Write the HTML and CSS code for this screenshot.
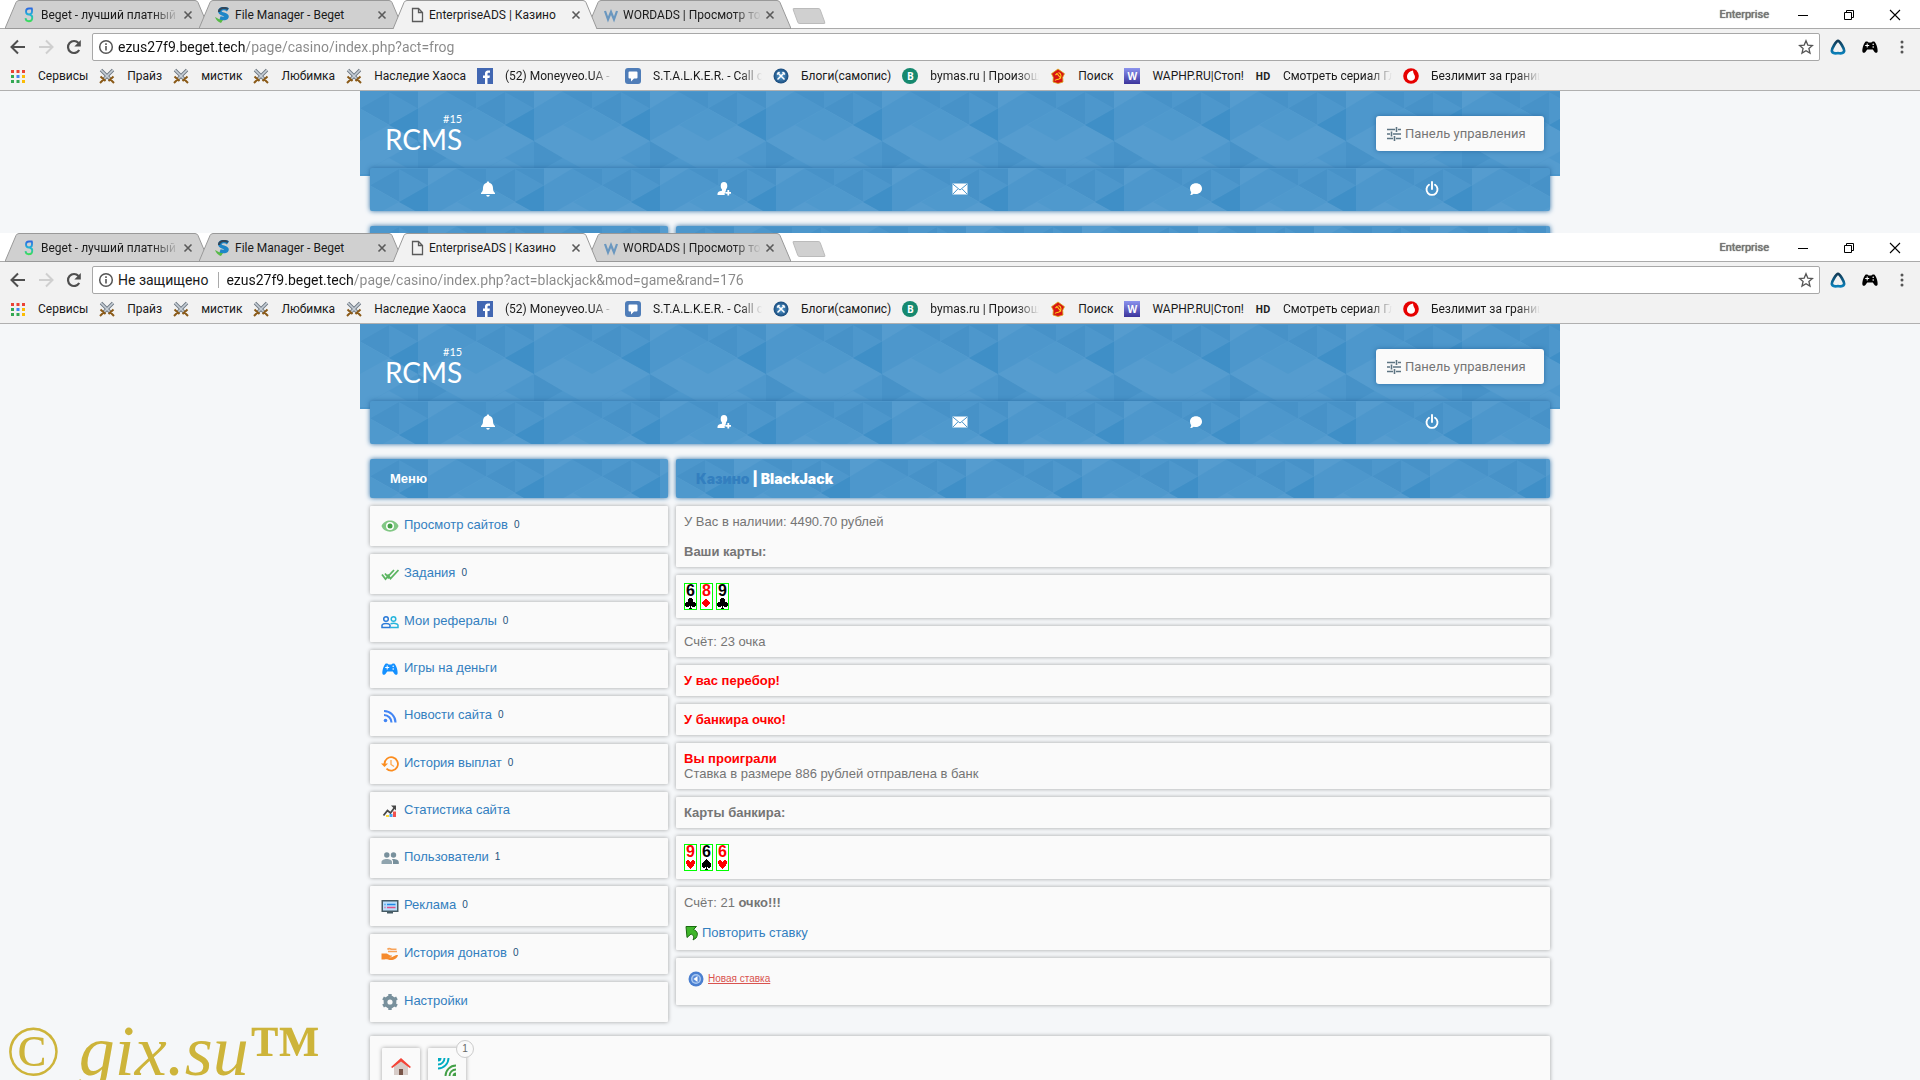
FILE: index.html
```html
<!DOCTYPE html>
<html lang="ru">
<head>
<meta charset="utf-8">
<title>EnterpriseADS | Казино</title>
<link rel="stylesheet" href="styles.css">
</head>
<body>
<svg class="sprite" aria-hidden="true">
  <defs>
    <linearGradient id="g-beget" x1="0" y1="0" x2="0" y2="1"><stop offset="0" stop-color="#2b6be0"/><stop offset=".5" stop-color="#20b5d8"/><stop offset="1" stop-color="#3ddc5a"/></linearGradient>
    <linearGradient id="g-drop" x1="0" y1="0" x2="0" y2="1"><stop offset="0" stop-color="#123a55"/><stop offset="1" stop-color="#0b7fb8"/></linearGradient>
    <radialGradient id="g-ball"><stop offset="0" stop-color="#5fa8dc"/><stop offset="1" stop-color="#184a7c"/></radialGradient>
  </defs>
  <symbol id="i-beget" viewBox="0 0 16 16"><path d="M11.500 1.500H8a3 3 0 1 0 0 6 3 3 0 0 0 3-3V1.500M8 7.500h.5a3.400 3.400 0 1 1-4 3.700" fill="none" stroke="url(#g-beget)" stroke-width="1.800"/></symbol>
  <symbol id="i-sprut" viewBox="0 0 16 16"><path d="M13 3C9 0 4 2 5 5c.8 2.500 7 2 7 4.500 0 2-4 2.500-7 1.500" fill="none" stroke="#1d86c8" stroke-width="3.600"/><path d="M4 5C4 1 9 0 13 2" fill="none" stroke="#33475a" stroke-width="2.200"/><path d="M0 10c3 1 4 3 8 3l-2 3c-3-1-5-3-6-6z" fill="#58b947"/></symbol>
  <symbol id="i-page" viewBox="0 0 16 16"><path d="M3.500 1.500h6l4 4v9h-10zM9.500 1.500v4h4" fill="none" stroke="#5a5a5a" stroke-width="1.300"/></symbol>
  <symbol id="i-wordads" viewBox="0 0 16 16"><path d="M2 4l3 8.500L8 5l3 7.500L14 4" fill="none" stroke="#6a97bf" stroke-width="2.200"/></symbol>
  <symbol id="i-x" viewBox="0 0 10 10"><path d="M1.500 1.500l7 7M8.500 1.500l-7 7" fill="none" stroke="currentColor" stroke-width="1.600"/></symbol>
  <symbol id="i-back" viewBox="0 0 16 16"><path d="M15 8H2M8 1.500L1.500 8 8 14.500" fill="none" stroke="currentColor" stroke-width="2"/></symbol>
  <symbol id="i-reload" viewBox="0 0 16 16"><path d="M13.200 11A6 6 0 1 1 12.500 4" fill="none" stroke="currentColor" stroke-width="2.200"/><path d="M14.800 1v6.500H8.300z" fill="currentColor"/></symbol>
  <symbol id="i-info" viewBox="0 0 16 16"><circle cx="8" cy="8" r="6.300" fill="none" stroke="#555" stroke-width="1.500"/><path d="M7.200 7h1.600v4.500H7.200zM7.200 4.300h1.600v1.600H7.200z" fill="#555"/></symbol>
  <symbol id="i-star" viewBox="0 0 16 16"><path d="M8 1.800l1.800 4.300 4.600.4-3.500 3 1.100 4.600L8 11.700l-4 2.400 1.100-4.600-3.500-3 4.600-.4z" fill="none" stroke="#555" stroke-width="1.300"/></symbol>
  <symbol id="i-drop" viewBox="0 0 16 16"><path d="M8 1.800C9.500 1.800 15 10 14 12.500S10 14.200 8 14.200 3 15 2 12.500 6.500 1.800 8 1.800z" fill="none" stroke="url(#g-drop)" stroke-width="2.700"/></symbol>
  <symbol id="i-pad" viewBox="0 0 16 16"><path d="M3.200 3C4 2.300 6 2.500 6.500 3.500h3C10 2.500 12 2.300 12.800 3 14.500 5 16 10 15.600 12.500c-.4 2-2.400 1.600-3.600-.2L10.800 10.500H5.200L4 12.300C2.800 14.100.8 14.500.4 12.500 0 10 1.500 5 3.200 3z" fill="currentColor"/><path d="M5.200 4.500v4M3.200 6.500h4" stroke="#fff" stroke-width="1"/><circle cx="11.200" cy="5.200" r=".8" fill="#fff"/><circle cx="11.200" cy="8" r=".8" fill="#fff"/></symbol>
  <symbol id="i-dots" viewBox="0 0 16 16"><g fill="#555"><circle cx="8" cy="3" r="1.500"/><circle cx="8" cy="8" r="1.500"/><circle cx="8" cy="13" r="1.500"/></g></symbol>
  <symbol id="i-apps" viewBox="0 0 16 16"><path d="M1 2h3v3H1zM6.500 2h3v3h-3zM12 2h3v3h-3z" fill="#ea4335"/><path d="M1 7h3v3H1z" fill="#34a853"/><path d="M6.500 7h3v3h-3z" fill="#4285f4"/><path d="M12 7h3v3h-3z" fill="#fbbc05"/><path d="M1 12h3v3H1zM6.500 12h3v3h-3z" fill="#34a853"/><path d="M12 12h3v3h-3z" fill="#fbbc05"/></symbol>
  <symbol id="i-swords" viewBox="0 0 16 16"><path d="M2 2l9 9M14 2l-9 9" stroke="#6e7883" stroke-width="3.400"/><path d="M2 2l9 9M14 2l-9 9" stroke="#c6ced6" stroke-width="1.700"/><path d="M1.500 8.500l5 4.500M14.500 8.500l-5 4.500M4.500 11.500L1 15M11.500 11.500L15 15" stroke="#8a5a18" stroke-width="2"/></symbol>
  <symbol id="i-fb" viewBox="0 0 16 16"><path d="M0 0h16v16H0z" fill="#4267b2"/><path d="M10.500 16V10h2l.4-2.500h-2.400V6c0-.8.3-1.200 1.300-1.200H13V2.600C12 2.400 8 2 8 5.600v1.900H6V10h2v6z" fill="#fff"/></symbol>
  <symbol id="i-chat" viewBox="0 0 16 16"><rect width="16" height="16" rx="3" fill="#4f7db8"/><path d="M3.500 4.500q0-1 1-1h7q1 0 1 1v5q0 1-1 1H9L6 13.500v-3H4.500q-1 0-1-1z" fill="#fff"/></symbol>
  <symbol id="i-tools" viewBox="0 0 16 16"><circle cx="8" cy="8" r="7.500" fill="url(#g-ball)"/><path d="M4.500 4.500l7 7M11.500 4.500l-7 7M4 6.500L6.500 4M12 6.500L9.500 4" stroke="#fff" stroke-width="1.500"/></symbol>
  <symbol id="i-ussr" viewBox="0 0 16 16"><path d="M8 1l6.500 4.700-1.800 3.600.3 4.700-5 1.500L3 14l.3-4.700L1.500 5.700z" fill="#d81414" stroke="#d9a514" stroke-width=".8"/><path d="M8.500 4.500c3 1 3.500 5 .5 6.500-1.500.7-3 .2-4 1.500M5.500 7L7 5.500l4 5" fill="none" stroke="#ffd21c" stroke-width="1.100"/></symbol>
  <symbol id="i-voda" viewBox="0 0 16 16"><circle cx="8" cy="8" r="7.800" fill="#e60000"/><path d="M10 2.500C5.500 3.500 4 6.500 4 9c0 5 8 5 8 0C12 7 10 5.500 10 2.500z" fill="#fff"/></symbol>
  <symbol id="i-min" viewBox="0 0 12 12"><path d="M1 6.500h10" stroke="#000"/></symbol>
  <symbol id="i-restore" viewBox="0 0 12 12"><path d="M1.500 3.500h7v7h-7zM3.500 3.500v-2h7v7h-2" fill="none" stroke="#000"/></symbol>
  <symbol id="i-close" viewBox="0 0 12 12"><path d="M1 1l10 10M11 1L1 11" fill="none" stroke="#000" stroke-width="1.100"/></symbol>

  <symbol id="i-tune" viewBox="0 0 16 16"><path d="M1 3.500h8M12 3.500h3M10.500 1v5M1 8h3M7 8h8M5.500 5.500v5M1 12.500h6M10 12.500h5M8.500 10v5" stroke="#5d7482" stroke-width="1.600"/></symbol>
  <symbol id="i-bell" viewBox="0 0 16 16"><path d="M8 .5c.8 0 1.200.5 1.200 1.200C12 2.400 13 4.800 13 7c0 2.800.6 3.800 2 5v1H1v-1c1.400-1.200 2-2.200 2-5 0-2.200 1-4.600 3.800-5.300C6.800 1 7.200.5 8 .5zM6.300 14h3.400c0 1-.7 1.700-1.700 1.700S6.300 15 6.300 14z" fill="#fff"/></symbol>
  <symbol id="i-adduser" viewBox="0 0 16 16"><path d="M8 1c2.200 0 3.300 1.500 3.300 3.700 0 1.700-.6 3-1.300 3.800v1.300h-.5V12H8.700v2H1.500c0-3 1-3.600 4.500-4.200V8.500C5.200 7.700 4.700 6.400 4.700 4.700 4.700 2.500 5.800 1 8 1z" fill="#fff"/><path d="M12.300 9v5.500M9.500 11.800H15" stroke="#fff" stroke-width="1.800"/></symbol>
  <symbol id="i-mail" viewBox="0 0 16 16"><path d="M.5 2.500h15v11H.5z" fill="#fff"/><path d="M.8 3L8 9l7.200-6M.8 13.200l5-5.200M15.200 13.200l-5-5.200" fill="none" stroke="#4b96cb" stroke-width="1"/></symbol>
  <symbol id="i-bubble" viewBox="0 0 16 16"><path d="M8 2.200c3.500 0 6 2.200 6 5.300S11.500 13 8 13c-.8 0-1.500-.1-2.200-.3-1 .9-2.300 1.200-3.600 1.200.6-.7.900-1.600 1-2.600C2.400 10.300 2 9 2 7.500c0-3.100 2.500-5.300 6-5.300z" fill="#fff"/></symbol>
  <symbol id="i-power" viewBox="0 0 16 16"><path d="M5 3.800a5.500 5.500 0 1 0 6 0M8 1v7" fill="none" stroke="#fff" stroke-width="1.900" stroke-linecap="round"/></symbol>

  <symbol id="i-eye" viewBox="0 0 18 18"><path d="M.5 9C3 1.500 15 1.500 17.500 9 15 16.500 3 16.500.5 9z" fill="#81c784"/><circle cx="9" cy="9" r="4" fill="#fff"/><circle cx="9" cy="9" r="2.500" fill="#43a047"/></symbol>
  <symbol id="i-checks" viewBox="0 0 18 18"><path d="M1 9.500l3.500 4.500L13 5M6.500 9.500L9.500 13.500 17.500 5M4 8.500L8 13.500" fill="none" stroke="#5cb562" stroke-width="1.800"/></symbol>
  <symbol id="i-refs" viewBox="0 0 18 18"><g fill="none" stroke-width="1.500"><circle cx="5" cy="6" r="2.300" stroke="#2979d8"/><path d="M1 14.500V12c1-2 7-2 8 0v2.500z" stroke="#2979d8"/><circle cx="12.500" cy="6" r="2.300" stroke="#26b5dc"/><path d="M9.500 10.800c3-1 7-.5 7.500 1.200v2.500H9.500" stroke="#26b5dc"/></g></symbol>
  <symbol id="i-rss" viewBox="0 0 18 18"><circle cx="4.500" cy="13.500" r="1.800" fill="#4285f4"/><path d="M3 8a7.500 7.500 0 0 1 7.500 7.500M3 4a11.500 11.500 0 0 1 11.500 11.500" fill="none" stroke="#4285f4" stroke-width="2.100"/></symbol>
  <symbol id="i-history" viewBox="0 0 18 18"><path d="M3.500 9a6.700 6.700 0 1 1 2 4.700" fill="none" stroke="#fb8c1e" stroke-width="1.800"/><path d="M0 8.500h7L3.500 12z" fill="#fb8c1e"/><path d="M10 5v4.500l3 2" fill="none" stroke="#ffa94d" stroke-width="1.300"/></symbol>
  <symbol id="i-stats" viewBox="0 0 18 18"><path d="M2.500 13.500l4-5 3 2.500L14 5" fill="none" stroke="#484848" stroke-width="1.800"/><path d="M10 3.500h5v5z" fill="#484848"/><path d="M5 13h3v2H5z" fill="#fdd835"/><path d="M8.500 12h3v3h-3z" fill="#42a5f5"/><path d="M12 9.500h3V15h-3z" fill="#ef5350"/></symbol>
  <symbol id="i-users" viewBox="0 0 18 18"><circle cx="5.800" cy="6" r="2.700" fill="#78909c"/><path d="M.5 15v-2c0-4 10.500-4 10.500 0v2z" fill="#90a4ae"/><circle cx="12.500" cy="6" r="2.700" fill="#78909c"/><path d="M12 15v-2.500c0-1-.5-1.800-1.300-2.500C14 9.500 17.800 10.800 17.800 13v2z" fill="#78909c"/></symbol>
  <symbol id="i-screen" viewBox="0 0 18 18"><path d="M.5 3h17v12H12v1.500H6V15H.5z" fill="#455a64"/><path d="M2 4.500h14v9H2z" fill="#bbdefb"/><path d="M3.500 7.500h1M6 7.500h8.500" stroke="#1e88e5" stroke-width="1.300"/><path d="M3.500 10.500h1M6 10.500h8.500" stroke="#e0508a" stroke-width="1.300"/></symbol>
  <symbol id="i-donate" viewBox="0 0 18 18"><path d="M.5 8.500h4c3 0 3 2 6 2 1 0 1 1.500-2.500 1.700 5 .3 5-2.200 9-2.200-1 4.500-6 6-10 4.500-2-.8-3 0-6.500 0z" fill="#f58a2c"/><path d="M6.500 4.500c1-1.500 2.500-1 4-.3h5M7 6.500h9" fill="none" stroke="#f7a35a" stroke-width="1.600"/></symbol>
  <symbol id="i-gear" viewBox="0 0 18 18"><circle cx="9" cy="9" r="4.500" fill="none" stroke="#78909c" stroke-width="3.800"/><path d="M7.300 1h3.400v3H7.300zM7.300 14h3.400v3H7.300z" fill="#78909c"/><path id="gt" d="M7.300 1h3.400v3H7.300zM7.300 14h3.400v3H7.300z" fill="#78909c" transform="rotate(60 9 9)"/><path d="M7.300 1h3.400v3H7.300zM7.300 14h3.400v3H7.300z" fill="#78909c" transform="rotate(120 9 9)"/></symbol>
  <symbol id="i-repeat" viewBox="0 0 16 16"><path d="M2 1.500h10.500l-3 3c4 1.500 5 5 2.500 8.500l-3 2c1.500-3 .5-5-2-6L3 12.500z" fill="#3fb62a" stroke="#1a6a10" stroke-width="1"/></symbol>
  <symbol id="i-prev" viewBox="0 0 16 16"><circle cx="8" cy="8" r="7.500" fill="#4a7fd0"/><circle cx="8" cy="8" r="5" fill="#a9c8f0"/><circle cx="8" cy="8" r="3.500" fill="#5b8cd8"/><path d="M9.500 5v6L5.500 8z" fill="#fff"/></symbol>
  <symbol id="i-home" viewBox="0 0 20 20"><path d="M3 9l7-6 7 6v9H3z" fill="#d7ccc8"/><path d="M8 12h4v6H8z" fill="#795548"/><path d="M0 10L10 1l10 9-1.300 1L10 4.500 1.300 11z" fill="#f44336"/></symbol>
  <symbol id="i-waves" viewBox="0 0 20 20"><g fill="none" stroke-width="1.900"><path d="M1 11.500A10.500 10.500 0 0 0 11.500 1M1 7.500A6.500 6.500 0 0 0 7.500 1" stroke="#00acc1"/><path d="M8.500 19A10.500 10.500 0 0 1 19 8.500M12.500 19a6.500 6.500 0 0 1 6.500-6.500" stroke="#43a047"/></g><path d="M1 1h3.500A3.500 3.500 0 0 1 1 4.500z" fill="#00acc1"/><path d="M19 19h-3.500a3.500 3.500 0 0 1 3.500-3.500z" fill="#43a047"/></symbol>

  <symbol id="s-club" viewBox="0 0 11 11" shape-rendering="crispEdges"><path d="M4 0h3v1h1v3h2v1h1v3h-1v1H7V8H6v2h1v1H4v-1h1V8H4v1H1V8H0V5h1V4h2V1h1z" fill="#000"/></symbol>
  <symbol id="s-diamond" viewBox="0 0 11 11" shape-rendering="crispEdges"><path d="M4 1h2v1h1v1h1v1h1v2H8v1H7v1H6v1H4V8H3V7H2V6H1V4h1V3h1V2h1z" fill="#f00"/></symbol>
  <symbol id="s-heart" viewBox="0 0 11 11" shape-rendering="crispEdges"><path d="M2 1h2v1h1v1h1V2h1V1h2v1h1v3H9v2H8v1H7v1H6v1H5V9H4V8H3V7H2V5H1V2h1z" fill="#f00"/></symbol>
  <symbol id="s-spade" viewBox="0 0 11 11" shape-rendering="crispEdges"><path d="M5 0h1v1h1v1h1v1h1v1h1v4H9v1H7V8H6v2h1v1H4v-1h1V8H4v1H2V8H1V4h1V3h1V2h1V1h1z" fill="#000"/></symbol>
</svg>

<section class="window window-top">
  <header class="chrome">
    <div class="tabstrip">
      <div class="tab"><svg class="ico"><use href="#i-beget"/></svg><span class="tab-title fade">Beget - лучший платный</span><button class="tab-x" aria-label="Закрыть"><svg><use href="#i-x"/></svg></button></div>
      <div class="tab"><svg class="ico"><use href="#i-sprut"/></svg><span class="tab-title">File Manager - Beget</span><button class="tab-x" aria-label="Закрыть"><svg><use href="#i-x"/></svg></button></div>
      <div class="tab active"><svg class="ico"><use href="#i-page"/></svg><span class="tab-title">EnterpriseADS | Казино</span><button class="tab-x" aria-label="Закрыть"><svg><use href="#i-x"/></svg></button></div>
      <div class="tab"><svg class="ico"><use href="#i-wordads"/></svg><span class="tab-title fade">WORDADS | Просмотр то</span><button class="tab-x" aria-label="Закрыть"><svg><use href="#i-x"/></svg></button></div>
      <button class="tab-new" aria-label="Новая вкладка"></button>
      <div class="winctl"><span class="profile">Enterprise</span><button aria-label="Свернуть"><svg><use href="#i-min"/></svg></button><button aria-label="Окно"><svg><use href="#i-restore"/></svg></button><button aria-label="Закрыть"><svg><use href="#i-close"/></svg></button></div>
    </div>
    <div class="toolbar">
      <button aria-label="Назад"><svg class="ico"><use href="#i-back"/></svg></button>
      <button class="off" aria-label="Вперёд"><svg class="ico flip"><use href="#i-back"/></svg></button>
      <button aria-label="Обновить"><svg class="ico"><use href="#i-reload"/></svg></button>
      <div class="omnibox">
        <svg class="ico"><use href="#i-info"/></svg>
        <input class="url" type="text" aria-label="Адрес" value="ezus27f9.beget.tech/page/casino/index.php?act=frog">
        <button aria-label="В закладки"><svg class="ico"><use href="#i-star"/></svg></button>
      </div>
      <button aria-label="Расширение"><svg class="ico"><use href="#i-drop"/></svg></button>
      <button class="black" aria-label="Игры"><svg class="ico"><use href="#i-pad"/></svg></button>
      <button aria-label="Меню"><svg class="ico"><use href="#i-dots"/></svg></button>
    </div>
    <nav class="bookmarks">
      <a href="#"><svg class="ico"><use href="#i-apps"/></svg><span>Сервисы</span></a>
      <a href="#"><svg class="ico"><use href="#i-swords"/></svg><span>Прайз</span></a>
      <a href="#"><svg class="ico"><use href="#i-swords"/></svg><span>мистик</span></a>
      <a href="#"><svg class="ico"><use href="#i-swords"/></svg><span>Любимка</span></a>
      <a href="#"><svg class="ico"><use href="#i-swords"/></svg><span>Наследие Хаоса</span></a>
      <a href="#"><svg class="ico"><use href="#i-fb"/></svg><span class="long fade">(52) Moneyveo.UA -</span></a>
      <a href="#"><svg class="ico"><use href="#i-chat"/></svg><span class="long fade">S.T.A.L.K.E.R. - Call of</span></a>
      <a href="#"><svg class="ico"><use href="#i-tools"/></svg><span>Блоги(самопис)</span></a>
      <a href="#"><b class="ico badge-b">B</b><span class="long fade">bymas.ru | Произош</span></a>
      <a href="#"><svg class="ico"><use href="#i-ussr"/></svg><span>Поиск</span></a>
      <a href="#"><b class="ico badge-w">W</b><span>WAPHP.RU|Стоп!</span></a>
      <a href="#"><b class="ico badge-hd">HD</b><span class="long fade">Смотреть сериал Гл</span></a>
      <a href="#"><svg class="ico"><use href="#i-voda"/></svg><span class="long fade">Безлимит за границ</span></a>
    </nav>
  </header>
  <div class="page">
    <div class="banner">
      <a class="logo" href="#"><small>#15</small>RCMS</a>
      <button class="panel-btn"><svg class="ico"><use href="#i-tune"/></svg>Панель управления</button>
    </div>
    <div class="content">
      <nav class="mainnav tri">
        <a href="#" aria-label="Уведомления"><svg class="ico"><use href="#i-bell"/></svg></a>
        <a href="#" aria-label="Друзья"><svg class="ico"><use href="#i-adduser"/></svg></a>
        <a href="#" aria-label="Почта"><svg class="ico"><use href="#i-mail"/></svg></a>
        <a href="#" aria-label="Чат"><svg class="ico"><use href="#i-bubble"/></svg></a>
        <a href="#" aria-label="Выход"><svg class="ico"><use href="#i-power"/></svg></a>
      </nav>
      <div class="cols">
        <aside class="side"><div class="head tri"></div></aside>
        <main class="main"><div class="head tri"></div></main>
      </div>
    </div>
  </div>
</section>

<section class="window window-main">
  <header class="chrome">
    <div class="tabstrip">
      <div class="tab"><svg class="ico"><use href="#i-beget"/></svg><span class="tab-title fade">Beget - лучший платный</span><button class="tab-x" aria-label="Закрыть"><svg><use href="#i-x"/></svg></button></div>
      <div class="tab"><svg class="ico"><use href="#i-sprut"/></svg><span class="tab-title">File Manager - Beget</span><button class="tab-x" aria-label="Закрыть"><svg><use href="#i-x"/></svg></button></div>
      <div class="tab active"><svg class="ico"><use href="#i-page"/></svg><span class="tab-title">EnterpriseADS | Казино</span><button class="tab-x" aria-label="Закрыть"><svg><use href="#i-x"/></svg></button></div>
      <div class="tab"><svg class="ico"><use href="#i-wordads"/></svg><span class="tab-title fade">WORDADS | Просмотр то</span><button class="tab-x" aria-label="Закрыть"><svg><use href="#i-x"/></svg></button></div>
      <button class="tab-new" aria-label="Новая вкладка"></button>
      <div class="winctl"><span class="profile">Enterprise</span><button aria-label="Свернуть"><svg><use href="#i-min"/></svg></button><button aria-label="Окно"><svg><use href="#i-restore"/></svg></button><button aria-label="Закрыть"><svg><use href="#i-close"/></svg></button></div>
    </div>
    <div class="toolbar">
      <button aria-label="Назад"><svg class="ico"><use href="#i-back"/></svg></button>
      <button class="off" aria-label="Вперёд"><svg class="ico flip"><use href="#i-back"/></svg></button>
      <button aria-label="Обновить"><svg class="ico"><use href="#i-reload"/></svg></button>
      <div class="omnibox">
        <svg class="ico"><use href="#i-info"/></svg>
        <span class="insecure">Не защищено</span>
        <input class="url" type="text" aria-label="Адрес" value="ezus27f9.beget.tech/page/casino/index.php?act=blackjack&amp;mod=game&amp;rand=176">
        <button aria-label="В закладки"><svg class="ico"><use href="#i-star"/></svg></button>
      </div>
      <button aria-label="Расширение"><svg class="ico"><use href="#i-drop"/></svg></button>
      <button class="black" aria-label="Игры"><svg class="ico"><use href="#i-pad"/></svg></button>
      <button aria-label="Меню"><svg class="ico"><use href="#i-dots"/></svg></button>
    </div>
    <nav class="bookmarks">
      <a href="#"><svg class="ico"><use href="#i-apps"/></svg><span>Сервисы</span></a>
      <a href="#"><svg class="ico"><use href="#i-swords"/></svg><span>Прайз</span></a>
      <a href="#"><svg class="ico"><use href="#i-swords"/></svg><span>мистик</span></a>
      <a href="#"><svg class="ico"><use href="#i-swords"/></svg><span>Любимка</span></a>
      <a href="#"><svg class="ico"><use href="#i-swords"/></svg><span>Наследие Хаоса</span></a>
      <a href="#"><svg class="ico"><use href="#i-fb"/></svg><span class="long fade">(52) Moneyveo.UA -</span></a>
      <a href="#"><svg class="ico"><use href="#i-chat"/></svg><span class="long fade">S.T.A.L.K.E.R. - Call of</span></a>
      <a href="#"><svg class="ico"><use href="#i-tools"/></svg><span>Блоги(самопис)</span></a>
      <a href="#"><b class="ico badge-b">B</b><span class="long fade">bymas.ru | Произош</span></a>
      <a href="#"><svg class="ico"><use href="#i-ussr"/></svg><span>Поиск</span></a>
      <a href="#"><b class="ico badge-w">W</b><span>WAPHP.RU|Стоп!</span></a>
      <a href="#"><b class="ico badge-hd">HD</b><span class="long fade">Смотреть сериал Гл</span></a>
      <a href="#"><svg class="ico"><use href="#i-voda"/></svg><span class="long fade">Безлимит за границ</span></a>
    </nav>
  </header>
  <div class="page">
    <div class="banner">
      <a class="logo" href="#"><small>#15</small>RCMS</a>
      <button class="panel-btn"><svg class="ico"><use href="#i-tune"/></svg>Панель управления</button>
    </div>
    <div class="content">
      <nav class="mainnav tri">
        <a href="#" aria-label="Уведомления"><svg class="ico"><use href="#i-bell"/></svg></a>
        <a href="#" aria-label="Друзья"><svg class="ico"><use href="#i-adduser"/></svg></a>
        <a href="#" aria-label="Почта"><svg class="ico"><use href="#i-mail"/></svg></a>
        <a href="#" aria-label="Чат"><svg class="ico"><use href="#i-bubble"/></svg></a>
        <a href="#" aria-label="Выход"><svg class="ico"><use href="#i-power"/></svg></a>
      </nav>
      <div class="cols">
        <aside class="side">
          <h2 class="head tri">Меню</h2>
          <a class="item" href="#"><svg><use href="#i-eye"/></svg>Просмотр сайтов <small>0</small></a>
          <a class="item" href="#"><svg><use href="#i-checks"/></svg>Задания <small>0</small></a>
          <a class="item" href="#"><svg><use href="#i-refs"/></svg>Мои рефералы <small>0</small></a>
          <a class="item plain games" href="#"><svg><use href="#i-pad"/></svg>Игры на деньги</a>
          <a class="item" href="#"><svg><use href="#i-rss"/></svg>Новости сайта <small>0</small></a>
          <a class="item" href="#"><svg><use href="#i-history"/></svg>История выплат <small>0</small></a>
          <a class="item plain" href="#"><svg><use href="#i-stats"/></svg>Статистика сайта</a>
          <a class="item" href="#"><svg><use href="#i-users"/></svg>Пользователи <small>1</small></a>
          <a class="item" href="#"><svg><use href="#i-screen"/></svg>Реклама <small>0</small></a>
          <a class="item" href="#"><svg><use href="#i-donate"/></svg>История донатов <small>0</small></a>
          <a class="item" href="#"><svg><use href="#i-gear"/></svg>Настройки</a>
        </aside>
        <main class="main">
          <h1 class="head tri title"><a href="#">Казино</a> | BlackJack</h1>
          <div class="box">У Вас в наличии: 4490.70 рублей<br><br><b>Ваши карты:</b></div>
          <div class="box cards">
            <span class="card">6<svg><use href="#s-club"/></svg></span>
            <span class="card red">8<svg><use href="#s-diamond"/></svg></span>
            <span class="card">9<svg><use href="#s-club"/></svg></span>
          </div>
          <div class="box">Счёт: 23 очка</div>
          <div class="box lose"><b>У вас перебор!</b></div>
          <div class="box lose"><b>У банкира очко!</b></div>
          <div class="box"><b class="lose">Вы проиграли</b><br>Ставка в размере 886 рублей отправлена в банк</div>
          <div class="box"><b>Карты банкира:</b></div>
          <div class="box cards">
            <span class="card red">9<svg><use href="#s-heart"/></svg></span>
            <span class="card">6<svg><use href="#s-spade"/></svg></span>
            <span class="card red">6<svg><use href="#s-heart"/></svg></span>
          </div>
          <div class="box">Счёт: 21 <b>очко!!!</b><br><br><a class="repeat" href="#"><svg class="ico"><use href="#i-repeat"/></svg>Повторить ставку</a></div>
          <div class="box newbet"><svg class="ico"><use href="#i-prev"/></svg><a href="#">Новая ставка</a></div>
        </main>
      </div>
      <footer class="foot">
        <a class="tile" href="#" aria-label="Главная"><svg><use href="#i-home"/></svg></a>
        <a class="tile" href="#" aria-label="Онлайн"><svg><use href="#i-waves"/></svg><span class="count">1</span></a>
      </footer>
    </div>
  </div>
  <div class="watermark"><span>©</span> gix.su<b>™</b></div>
</section>
</body>
</html>
```
FILE: styles.css
```css
* { box-sizing: border-box; }

body {
  margin: 0;
  height: 100vh;
  overflow: hidden;
  display: flex;
  flex-direction: column;
  background: #f5f7f9;
  color: #757575;
  font: 13px/15px "Liberation Sans", Arial, sans-serif;
}

a { color: #337fbf; text-decoration: none; }
button { border: 0; padding: 0; background: none; font: inherit; color: inherit; }
.sprite { position: absolute; width: 0; height: 0; }
.ico { width: 16px; height: 16px; flex: none; }
.flip { transform: scaleX(-1); }
.fade { mask-image: linear-gradient(to right, #000 80%, transparent); }

.window { position: relative; overflow: hidden; }
.window-top { flex: 0 0 233px; }
.window-main { flex: 1; }

/* browser frame */
.chrome {
  height: 91px;
  display: flex;
  flex-direction: column;
  background: #f2f2f2;
  border-bottom: 1px solid #b0b0b0;
  color: #1a1a1a;
  font: 12px/16px Roboto, "Open Sans", sans-serif;
}
.tabstrip {
  flex: 0 0 29px;
  display: flex;
  padding: 0 2px 0 5px;
  background: #fff linear-gradient(#aaa, #aaa) bottom / 100% 1px no-repeat;
}
.tab {
  flex: none;
  width: 204px;
  height: 29px;
  margin-right: -10px;
  padding: 0 16px;
  display: flex;
  align-items: center;
  background: url("data:image/svg+xml,%3Csvg xmlns='http://www.w3.org/2000/svg' width='204' height='29'%3E%3Cpath d='M0 28.500L11 2.500Q12 .5 14 .5H190Q192 .5 193 2.500L204 28.500z' fill='%23d0d0d0' stroke='%23999'/%3E%3C/svg%3E");
}
.tab.active {
  z-index: 1;
  background-image: url("data:image/svg+xml,%3Csvg xmlns='http://www.w3.org/2000/svg' width='204' height='29'%3E%3Cpath d='M0 29L11 2.500Q12 .5 14 .5H190Q192 .5 193 2.500L204 29' fill='%23f2f2f2' stroke='%23999'/%3E%3C/svg%3E");
}
.tab-title { flex: 1; min-width: 0; margin: 0 4px; white-space: nowrap; }
.tab-x { width: 10px; height: 10px; display: flex; color: #5a5a5a; }
.tab-x svg { width: 10px; height: 10px; }
.tab-new {
  width: 28px;
  height: 16px;
  margin: 8px 0 0 14px;
  background: #d0d0d0;
  border: 1px solid #bbb;
  border-radius: 2px;
  transform: skewX(20deg);
}
.winctl { margin-left: auto; display: flex; align-items: center; }
.winctl button { width: 46px; height: 28px; display: flex; align-items: center; justify-content: center; }
.winctl svg { width: 12px; height: 12px; }
.profile { margin-right: 11px; color: #777; font-size: 11px; text-shadow: 0 0 1px #333; }

.toolbar { flex: 0 0 34px; margin-top: 1px; padding: 0 2px 0 4px; display: flex; align-items: center; }
.toolbar > button { width: 28px; height: 28px; display: flex; align-items: center; justify-content: center; color: #4f4f4f; }
.toolbar > .off { color: #cfcfcf; }
.toolbar > .black { color: #000; }
.toolbar > .omnibox ~ button { width: 32px; }
.omnibox {
  flex: 1;
  height: 28px;
  margin-left: 4px;
  margin-right: 2px;
  padding: 0 5px;
  display: flex;
  align-items: center;
  background: #fff;
  border: 1px solid #a8a8a8;
  border-radius: 2px;
  font-size: 14px;
}
.omnibox button { display: flex; }
.insecure { padding: 0 10px 0 4px; border-right: 1px solid #aaa; margin-right: 3px; }
.url {
  flex: 1;
  padding: 0 4px;
  border: 0;
  font: inherit;
  color: transparent;
  background: linear-gradient(to right, #111 131px, #888 131px);
  background-clip: text;
}

.bookmarks { flex: 1; padding: 0 6px 3px; display: flex; align-items: center; }
.bookmarks a { flex: none; display: flex; align-items: center; color: #1a1a1a; margin-right: 11px; }
.bookmarks a:first-child { margin-left: 4px; }
.bookmarks span { margin-left: 12px; white-space: nowrap; }
.bookmarks .long { width: 109px; }
.bookmarks b { text-align: center; font: bold 10px/16px "Open Sans", sans-serif; }
.badge-b { border-radius: 50%; background: #16896f; color: #fff; }
.badge-w { background: linear-gradient(#8b93ee, #3c349c); color: #fff; }
.badge-hd { color: #222; }

/* site */
.page { max-width: 1200px; margin: 0 auto; }
.tri, .banner {
  background: #4d97cc url("data:image/svg+xml,%3Csvg xmlns='http://www.w3.org/2000/svg' width='116' height='100'%3E%3Cpath fill='%234792c8' d='M29 1L58 17.500V1zM87 1L116 17.500V1zM0 17.500L29 1V34zM58 50L87 67L58 83zM0 50L29 34V67z'/%3E%3Cpath fill='%23559ccf' d='M58 0H87L58 17.500zM116 17.500L58 50L87 67L116 83zM0 50V17.500L58 50L0 83zM29 67L0 83H58z'/%3E%3Cpath fill='%234f99cd' d='M116 17.500V50L87 34zM0 17.500L29 34L0 50z'/%3E%3Cpath fill='%233f8fc7' d='M58 17.500L29 34L58 50z'/%3E%3C/svg%3E");
}
.banner { height: 85px; padding: 25px 16px 0 25px; display: flex; justify-content: space-between; align-items: flex-start; }
.logo { display: flex; flex-direction: column; margin-top: -3px; color: #fff; font: 28px/28px Lato, sans-serif; }
.logo small { align-self: flex-end; font-size: 11px; line-height: 12px; }
.panel-btn {
  width: 168px;
  height: 35px;
  padding: 0 10px;
  display: flex;
  align-items: center;
  gap: 3px;
  border-radius: 3px;
  background: #fafafa;
  box-shadow: 0 0 5px #2c6ea4;
  font: 13px/16px Roboto, sans-serif;
  white-space: nowrap;
}
.content { padding: 0 10px; }
.mainnav, .head { border-radius: 2px; box-shadow: 0 0 5px #2c6ea4; }
.mainnav { position: relative; height: 43px; margin-top: -8px; padding-bottom: 2px; display: flex; align-items: center; }
.mainnav a { flex: 1; display: flex; justify-content: center; }
.cols { display: flex; gap: 8px; margin-top: 15px; }
.side, .main { display: flex; flex-direction: column; gap: 8px; }
.side { flex: 0 0 298px; }
.main { flex: 1; }
.head {
  height: 39px;
  margin: 0;
  padding: 0 20px;
  color: #fff;
  font: bold 13px/39px "Liberation Sans", Arial, sans-serif;
}
.title { font: 900 14px/39px Inter, sans-serif; }

.item, .box, .foot, .tile { background: #fafafa; box-shadow: 0 0 4px rgba(0, 0, 0, .35); border-radius: 1px; }
.item { height: 40px; padding: 0 11px 3px; display: flex; align-items: center; }
.item svg { width: 18px; height: 18px; margin: 3px 5px 0 0; }
.item small { margin-left: 6px; color: #23527c; font: 10px/15px "Liberation Sans", Arial, sans-serif; }
.plain { height: 38px; }
.games svg { color: #1490ff; padding: 1px; }

.box { padding: 8px; }
.lose { color: #f00; }
.cards { display: flex; gap: 3px; }
.card {
  width: 13px;
  height: 27px;
  display: flex;
  flex-direction: column;
  justify-content: space-between;
  align-items: center;
  border: 1px solid #0f0;
  background: #fff;
  color: #000;
  font: bold 16px/13px "Liberation Sans", Arial, sans-serif;
}
.red { color: #f00; }
.card svg { width: 11px; height: 11px; }
.repeat { display: flex; align-items: flex-start; gap: 2px; height: 17px; }
.newbet { height: 47px; padding: 0 12px 6px; display: flex; align-items: center; gap: 4px; }
.newbet a { color: #d9534f; text-decoration: underline; font-size: 10px; }

.foot { margin-top: 14px; padding: 12px; min-height: 100px; display: flex; gap: 8px; }
.tile { position: relative; width: 38px; height: 38px; padding-top: 9px; display: flex; justify-content: center; }
.tile svg { width: 20px; height: 20px; }
.count {
  position: absolute;
  top: -8px;
  right: -8px;
  width: 18px;
  height: 18px;
  border: 1px solid #ccc;
  border-radius: 50%;
  background: #fafafa;
  color: #666;
  font-size: 10px;
  line-height: 16px;
  text-align: center;
}
.watermark {
  position: absolute;
  left: 6px;
  bottom: -7px;
  color: #cdb43a;
  font: italic 72px/72px "Liberation Serif", "Times New Roman", serif;
}
.watermark span, .watermark b { font-style: normal; }
```
